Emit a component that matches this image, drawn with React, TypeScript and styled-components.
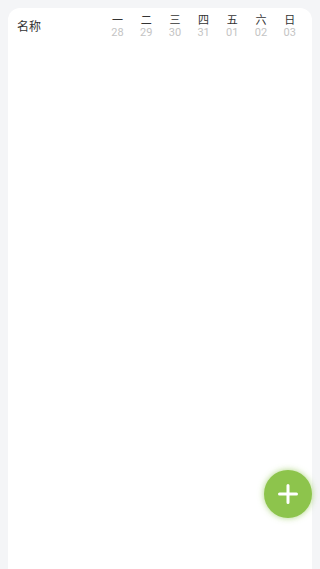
import React from "react";
import styled, { createGlobalStyle } from "styled-components";

const GlobalStyle = createGlobalStyle`
  html, body {
    margin: 0;
    padding: 0;
    background: #f4f5f7;
    font-family: "Noto Sans CJK SC", "Noto Sans", sans-serif;
  }
`;

const Page = styled.div`
  padding: 8px 8px 0;
  min-height: 100vh;
  box-sizing: border-box;
  display: flex;
`;

const Card = styled.div`
  flex: 1;
  background: #fff;
  border-radius: 12px 12px 0 0;
  min-height: calc(100vh - 8px);
`;

const Header = styled.div`
  display: flex;
  align-items: center;
  height: 35px;
  padding: 0 8px 0 9px;
`;

const NameLabel = styled.div`
  flex: 1;
  font-size: 12px;
  color: #333;
  line-height: 1;
  padding-top: 1px;
`;

const Days = styled.div`
  display: grid;
  grid-template-columns: repeat(7, 28.7px);
`;

const DayCell = styled.div`
  display: flex;
  flex-direction: column;
  align-items: center;
  gap: 1px;
`;

const DayName = styled.span`
  font-size: 11px;
  line-height: 12px;
  color: #333;
`;

const DayDate = styled.span`
  font-family: "Roboto", "Noto Sans", sans-serif;
  font-size: 11px;
  line-height: 13px;
  color: #c4c4c4;
`;

const Fab = styled.button`
  position: fixed;
  right: 8px;
  bottom: 51px;
  width: 48px;
  height: 48px;
  border-radius: 50%;
  border: none;
  background: #8dc44c;
  box-shadow: 0 0 6px rgba(139, 195, 74, 0.7);
  display: flex;
  align-items: center;
  justify-content: center;
  padding: 0;
  cursor: pointer;
`;

const days = [
  { name: "一", date: "28" },
  { name: "二", date: "29" },
  { name: "三", date: "30" },
  { name: "四", date: "31" },
  { name: "五", date: "01" },
  { name: "六", date: "02" },
  { name: "日", date: "03" },
];

export default function App() {
  return (
    <>
      <GlobalStyle />
      <Page>
        <Card>
          <Header>
            <NameLabel>名称</NameLabel>
            <Days>
              {days.map((d) => (
                <DayCell key={d.date}>
                  <DayName>{d.name}</DayName>
                  <DayDate>{d.date}</DayDate>
                </DayCell>
              ))}
            </Days>
          </Header>
        </Card>
      </Page>
      <Fab aria-label="add">
        <svg width="20" height="20" viewBox="0 0 20 20">
          <path d="M10 1.5v17M1.5 10h17" stroke="#fff" strokeWidth="3" strokeLinecap="round" />
        </svg>
      </Fab>
    </>
  );
}
